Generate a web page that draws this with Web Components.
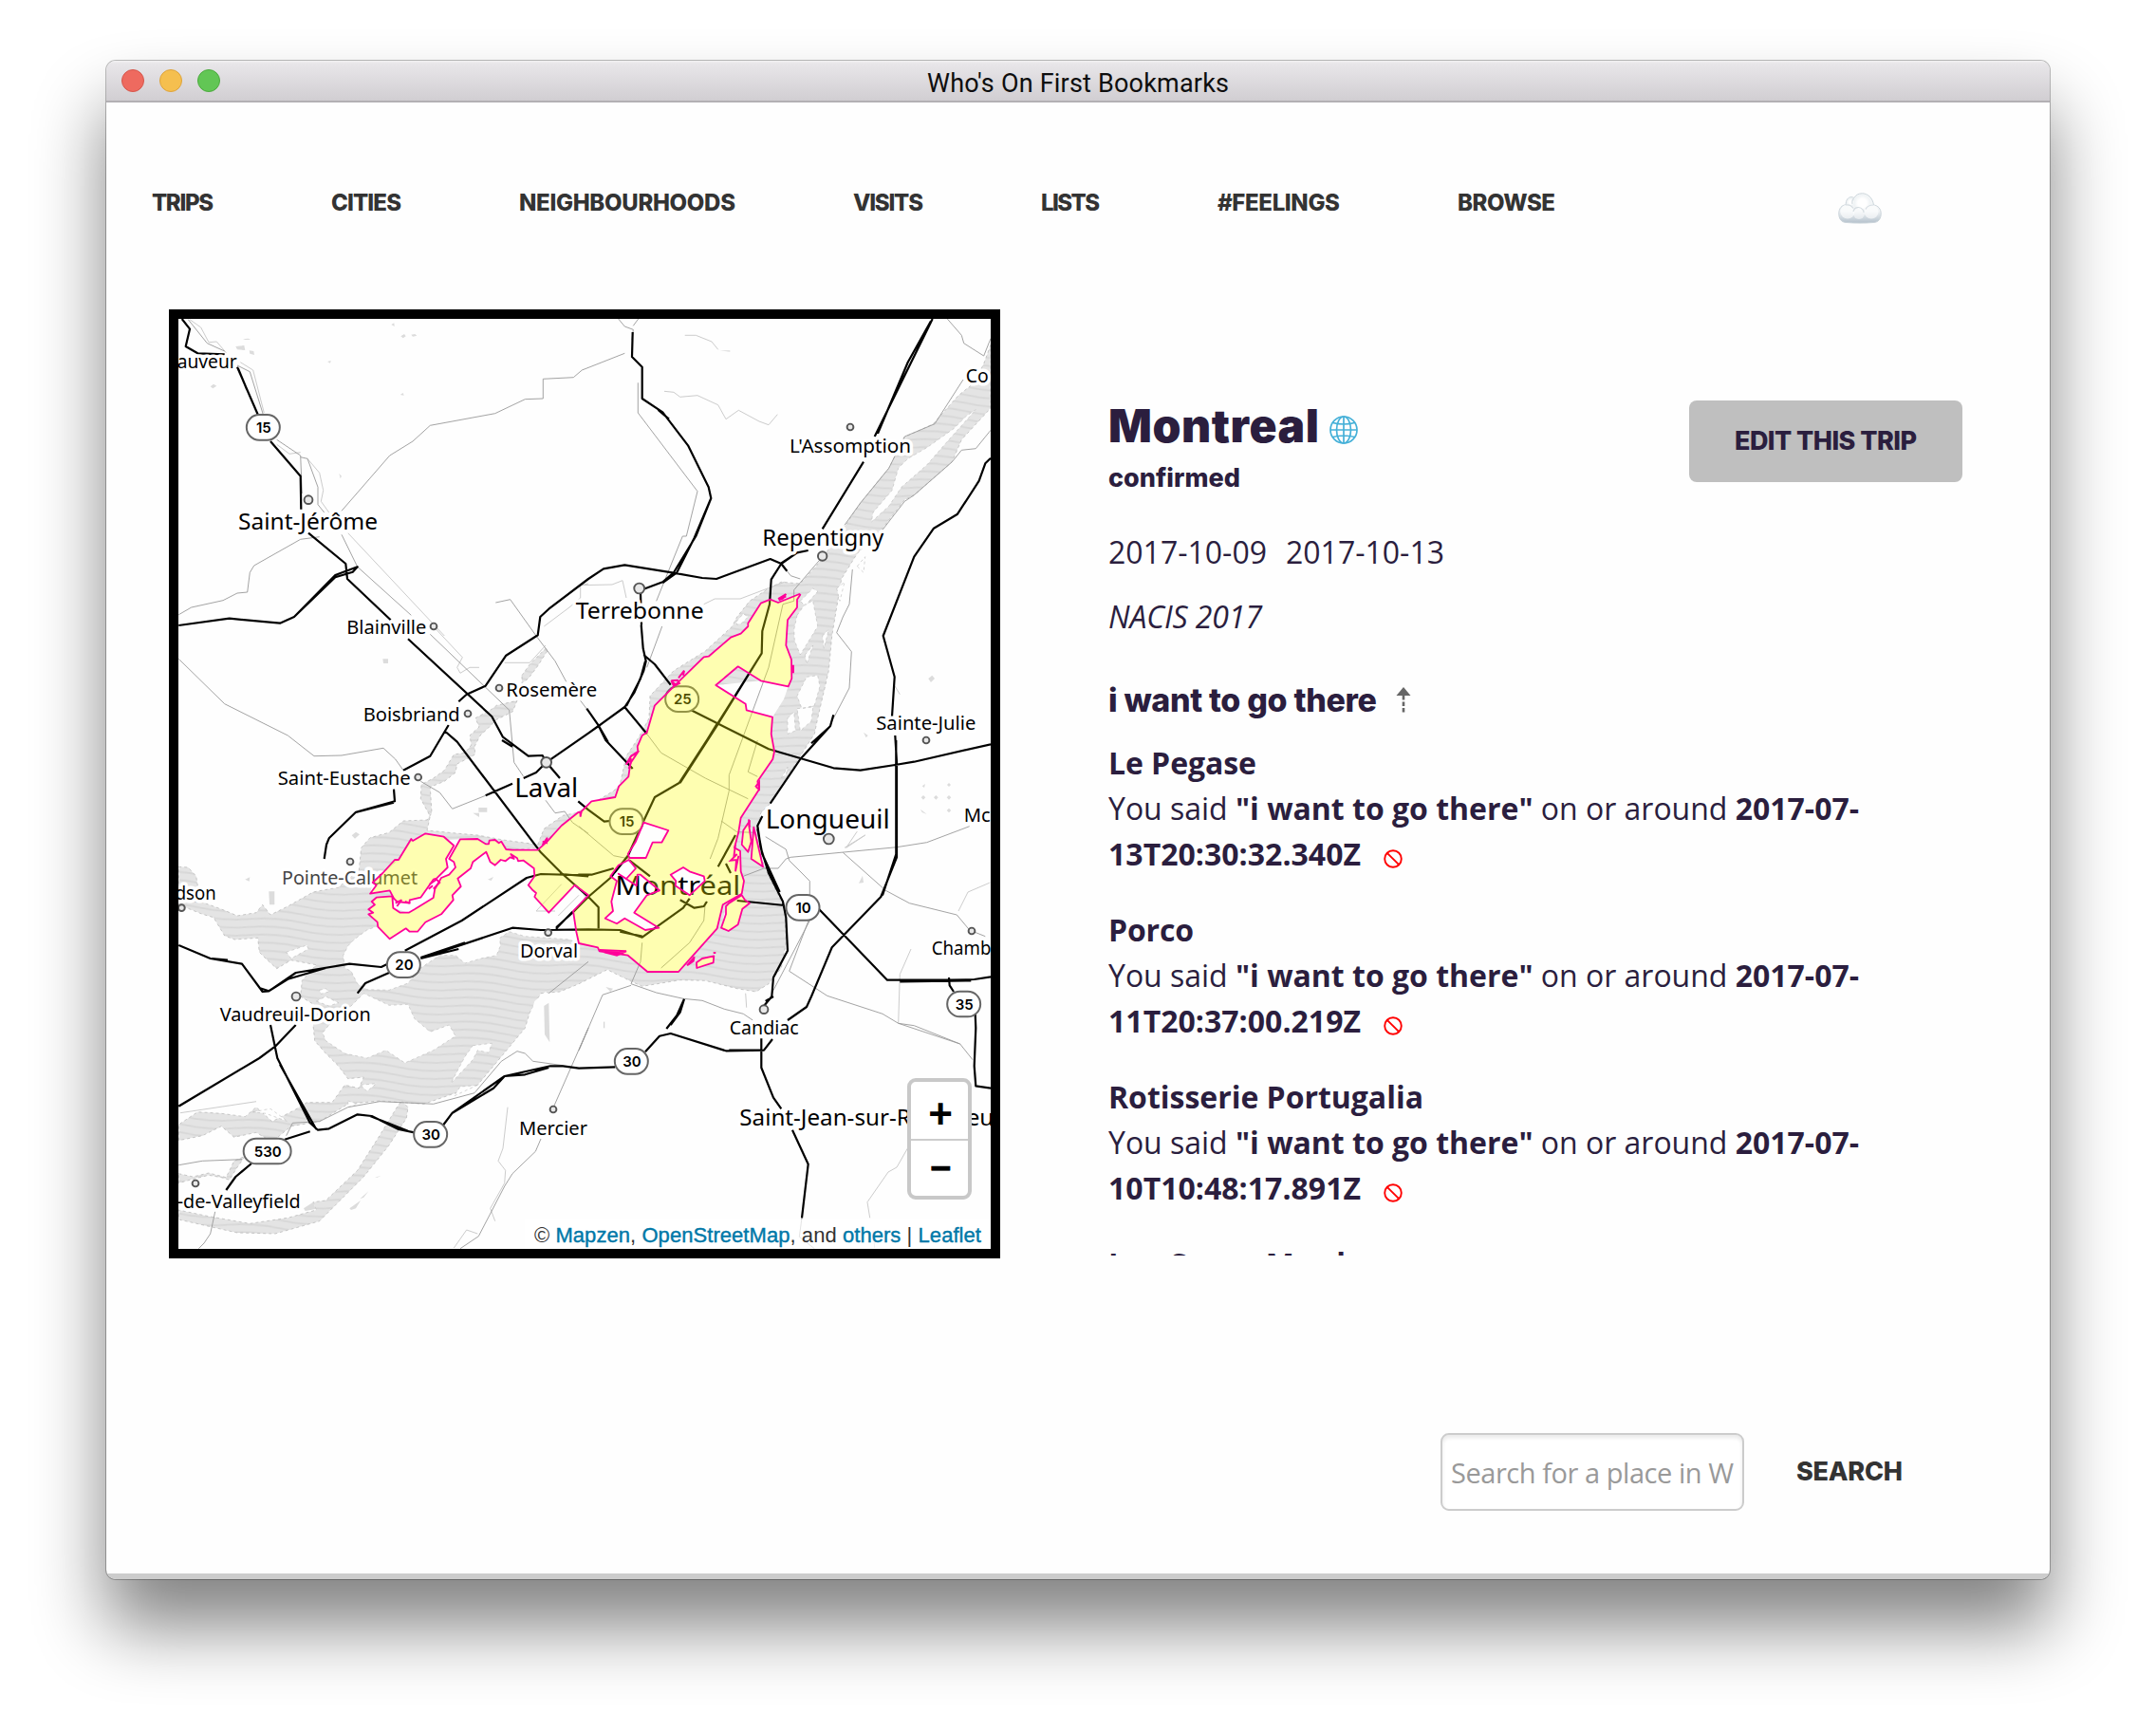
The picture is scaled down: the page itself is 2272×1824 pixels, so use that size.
<!DOCTYPE html>
<html lang="en">
<head>
<meta charset="utf-8">
<title>Who's On First Bookmarks</title>
<style>
  html, body { margin: 0; background: #fff; }
  body { width: 2272px; height: 1824px; overflow: hidden; font-family: "Open Sans", "Noto Sans", sans-serif; color: #2b1e3e; }
</style>
</head>
<body>
<app-window caption="Who's On First Bookmarks">
  <nav-bar></nav-bar>
  <main-row>
    <trip-map></trip-map>
    <trip-detail></trip-detail>
  </main-row>
  <search-bar></search-bar>
</app-window>

<script>
const define = (name, html, setup) => customElements.define(name, class extends HTMLElement {
  connectedCallback() {
    if (this.shadowRoot) return;
    this.attachShadow({ mode: 'open' }).innerHTML = html;
    if (setup) setup.call(this, this.shadowRoot);
  }
});

/* A run of text tracked to an exact measure. */
define('fit-text', `<style>:host{display:inline-block;white-space:nowrap}span{display:inline-block;white-space:pre}</style><span><slot></slot></span>`,
  function (root) {
    const s = root.querySelector('span'), want = +this.getAttribute('w'), n = this.textContent.length;
    const d = (want - s.getBoundingClientRect().width) / (n - 1);
    s.style.letterSpacing = d.toFixed(3) + 'px';
    s.style.marginRight = (-d).toFixed(3) + 'px';
  });

define('app-window', `<style>
  :host{display:flex;flex-direction:column;margin:64px 112px;width:2048px;height:1600px;border-radius:10px;background:#fefefe;overflow:hidden;
    box-shadow:0 0 0 1px rgba(0,0,0,.26),0 50px 76px rgba(0,0,0,.49)}
  header{height:42px;flex:none;display:grid;grid-template-columns:1fr auto 1fr;align-items:center;
    background:linear-gradient(#f3f2f3 0,#e8e6e9 3px,#d1ced2 100%);border-bottom:2px solid #b3b0b4}
  .lights{display:flex;gap:16px;padding-left:16px}
  i{box-sizing:border-box;width:24px;height:24px;border-radius:50%;background:#ee6a5f;border:1px solid #d5564b}
  i+i{background:#f5bf4f;border-color:#dda33c} i+i+i{background:#62c655;border-color:#4caa3e}
  .cap{font:27px/42px Roboto,sans-serif;color:#0e0e0e;padding-top:3px;box-sizing:border-box;height:42px}
  .foot{height:6px;background:#ccc;margin-top:auto;flex:none}
  </style><header><div class="lights"><i></i><i></i><i></i></div><div class="cap"></div><div></div></header>
  <slot></slot><div class="foot"></div>`,
  function (root) { root.querySelector('.cap').innerHTML = `<fit-text w="318">${this.getAttribute('caption')}</fit-text>`; });

define('nav-bar', `<style>
  :host{display:flex;height:218px;flex:none;padding:91px 0 0 48px;box-sizing:border-box;gap:124px;font:800 24px/30px Inter,sans-serif;color:#333}
  svg{display:block;margin:4px 0 0 174px}
  </style>
  <fit-text w="65">TRIPS</fit-text><fit-text w="74">CITIES</fit-text><fit-text w="228">NEIGHBOURHOODS</fit-text>
  <fit-text w="74">VISITS</fit-text><fit-text w="62">LISTS</fit-text><fit-text w="129">#FEELINGS</fit-text><fit-text w="103">BROWSE</fit-text>
  <svg width="46" height="33" viewBox="0 0 46 33">
    <defs><linearGradient id="c" x2="0" y2="1"><stop offset="0" stop-color="#f6f8f9"/><stop offset=".6" stop-color="#f0f3f5"/><stop offset="1" stop-color="#b4c1cc"/></linearGradient>
    <radialGradient id="p"><stop offset=".5" stop-color="#fff"/><stop offset="1" stop-color="#eef2f4"/></radialGradient></defs>
    <path d="M9 31.500C3 31.500.7 27 .8 22 .8 16.500 4 13 8.200 12.800 8 8 10.500 4.600 14 4.700 15.500 4.700 16 5.200 17 5.500 18.500 2.500 21.500.8 25.500.8 31 .8 36.500 5.500 37.500 13 42 13.500 45.200 17 45.200 22 45.200 27.500 42.500 31.500 37 31.500 28 32.300 18 32.300 9 31.500Z" fill="url(#c)" stroke="#cbd4da" stroke-width="1"/>
    <circle cx="25.500" cy="11" r="9" fill="url(#p)"/><circle cx="13.500" cy="10" r="4" fill="url(#p)"/>
    <circle cx="10" cy="20" r="7.500" fill="#fff" opacity=".6"/><circle cx="35" cy="20" r="7.500" fill="#fff" opacity=".6"/><circle cx="22" cy="22" r="6" fill="#fff" opacity=".5"/>
    <path d="M8 13c3-.6 6 .5 8 3.500M16.500 6c-2 2-2 4-1.500 6M37.500 13c-5 0-7 1-8.500 4.500M16 20c1-5 7-6 10-2 1 1 1 2 1 3" fill="none" stroke="#d6dde2" stroke-width="1.200"/>
  </svg>`);

define('main-row', `<style>:host{display:flex;gap:114px;padding-left:66px;height:1000px;flex:none}</style><slot></slot>`);

/* Survey sheets: each letter is a sheet origin; points are given in thirds of a pixel. */
const SHEET = { A: [170, 320], B: [610, 320], C: [170, 660], D: [610, 600], E: [170, 1000], F: [610, 1000] };
const at = (k, x, y) => [SHEET[k][0] + x / 3, SHEET[k][1] + y / 3];
const line = (str, close) => {
  let k = 'A', out = '', cmd = 'M';
  for (const t of str.trim().split(/\s+/)) {
    if (SHEET[t]) { k = t; continue; }
    if (t === '/') { if (close) out += 'Z'; cmd = 'M'; continue; }
    const [x, y] = t.split(',').map(Number), p = at(k, x, y);
    out += cmd + p[0].toFixed(1) + ' ' + p[1].toFixed(1); cmd = 'L';
  }
  return out + (close ? 'Z' : '');
};

const water = `
 B 1302,130 1280,190 1250,250 1200,290 1120,380 1030,422 1000,480 980,520 890,630 850,690 780,790 750,830 700,885 640,880 600,900 540,940 500,990
 D 485,180 400,258 300,320 225,400 222,470 190,530 150,590 130,680 110,700 10,760 C 1310,590 1270,598 1210,640 1190,690 1080,675 1000,660 940,655 840,645
 850,600 820,545 822,500 860,480 895,455 925,405 960,400 980,375 975,345 1005,318 993,290 1045,262 1060,250 1125,235 1110,270 1060,295 1030,325 1008,345 990,380 992,405 935,435 930,462 895,490 850,508 855,590
 840,612 765,615 720,652 660,668 632,700 625,770 560,825 480,840 400,885 345,912 320,880 300,905 240,915 200,898 130,872 60,868 115,820 110,790 85,762 55,760 55,880 130,910 165,920 200,978 232,990 305,985 310,1030
 E 330,30 365,62 410,35 490,50 445,100 440,150 490,180 480,240 485,290 520,330 560,370 590,410 640,405 625,440 580,430 540,485 460,485 420,510 350,545 300,500 265,530 190,520 115,515 55,555 55,605 130,590 190,560 230,595 300,580 350,610 410,560 500,545 590,490 690,480 830,490 930,455 1000,430 1100,310 1150,250 1165,200 1200,140 1260,135 1320,110
 F 40,90 90,65 150,95 200,118 320,98 400,100 500,125 560,135 600,110 640,60 D 655,1180 650,1070 630,1030 600,970 580,920 562,830 575,770 605,740 700,590 745,520 755,470 790,320 800,210
 B 800,1050 830,870 880,790 960,710 1030,620 1060,605 1180,500 1210,430 1302,330 /
 C 1140,155 1165,120 1215,70 1222,75 1190,125 1160,165 1140,180 /
 E 760,480 780,500 775,535 720,620 640,720 500,860 360,900 240,897 130,872 55,855 55,825 150,845 280,868 400,850 490,825 480,800 520,795 620,700 690,590 745,500 /
 E 55,710 100,720 150,708 205,722 230,670 265,655 240,690 215,730 190,722 150,715 90,730 55,740`;
const land = `
 B 1225,355 1185,395 1100,455 1040,490 1010,520 990,590 930,660 925,690 980,640 1020,580 1100,510 1170,430 1255,335 /
 D 690,145 715,110 740,100 755,180 700,270 682,225 680,190 /
 D 720,340 755,335 762,370 745,430 705,440 690,400 / D 660,470 680,450 685,510 660,520 / D 690,440 740,435 735,480 700,510 / D 498,165 520,140 535,150 515,170 500,175 /
 D 715,270 740,240 720,300 / D 770,210 790,190 775,250 / D 640,660 660,625 655,650 / B 880,830 905,800 900,850 / B 700,940 740,900 755,910 715,955 / B 815,900 840,880 825,940 /
 E 530,240 600,180 640,140 720,178 780,175 800,220 850,262 910,240 930,275 860,320 770,360 710,320 650,345 580,330 520,290 510,265 /
 C 722,985 860,855 1027,710 1200,700 1320,700 1350,985 1320,1003 1290,990 1220,985 1150,980 1100,965 1070,985 1072,1010 1060,1040 E 1010,30 960,45 930,20 880,20 820,60 780,108 720,130 650,128 620,110 600,70 580,60 575,20 C 590,1010 610,990 650,960 690,945 /
 E 985,305 1045,298 1035,328 1000,320 985,350 915,425 960,340 / E 1000,430 925,465 945,435 985,432 / E 630,430 680,425 650,450 / E 590,480 620,490 590,500 /
 E 500,130 520,125 530,135 505,142 / E 490,165 520,150 560,170 530,180 /
 E 395,10 460,-12 465,0 410,30 / E 290,515 345,505 400,545 330,520`;
/* Ground below the city shape, where the shore has no outline of its own. */
const ground = `
 D 437,366 575,352 662,370 648,410 612,467 530,445 /
 C 735,860 860,800 905,720 905,675 945,673 1000,700 930,800 860,870 780,905 735,890`;
const specks = `
 A 235,135 262,132 265,147 240,145 / A 278,148 292,150 294,162 280,158 / A 258,112 275,110 282,114 265,114 / A 155,262 165,254 175,260 163,268 / A 757,103 768,96 773,103 764,109 / A 790,98 802,96 808,101 795,104 / A 727,66 736,61 737,72 / A 525,183 536,180 534,188 / A 755,288 764,282 767,290 / A 562,537 570,545 566,553 /
 C 700,103 717,103 717,117 702,117 / C 602,661 615,650 627,658 612,671 / C 340,838 358,838 358,880 342,880 / C 1003,573 1030,573 1030,587 1003,587 / C 985,590 1005,590 1005,603 / C 265,800 280,793 278,806 / C 1032,800 1050,792 1043,804 /
 D 1085,685 1095,678 1092,690 / D 1164,681 1170,675 1176,681 1170,687 / D 1082,721 1089,714 1096,721 1089,728 / D 1122,721 1129,714 1136,721 1129,728 / D 1163,721 1170,714 1177,721 1170,728 / D 1163,762 1170,755 1177,762 1170,769 / D 1080,758 1100,774 1085,768 / D 1105,345 1117,335 1125,345 1113,357 / D 885,992 897,968 900,990 / D 900,515 914,525 908,532 /
 E 450,820 480,800 488,822 455,828 / E 595,820 630,795 615,820 600,825 / E 628,790 655,766 640,785 / E 675,722 695,716 683,722 / E 1210,180 1225,170 1228,295 1212,270 /
 F 85,120 108,125 100,135 / B 445,148 478,148 478,152 /`;
const islets = `E 1170,200 1180,165 1215,135 1235,150 1232,190 1220,235 1195,195 / F 60,110 150,95 100,75 60,90`;
const trunk = `
 A 65,48 90,80 77,135 115,157 200,160 / A 240,200 305,350 / A 243,205 270,270 / A 345,435 440,545 442,650 / A 465,725 583,822 588,870 725,1000 / C 780,40 1045,285 1080,350 1160,410 1205,408 1217,430 1260,480 / C 1077,360 1110,380 / C 1318,553 1350,580 D 80,797 100,795 /
 A 55,1017 215,995 375,1010 420,990 550,865 605,848 620,832 550,858 420,990 /
 C 765,455 850,410 908,312 / C 895,330 935,365 1200,715 1265,780 1350,855 D 62,1068 62,1135 /
 C 940,238 965,215 1025,188 1090,92 1190,28 A 1198,990 1225,965 1350,870 B 78,838 145,826 295,850 390,867 435,870 605,807 640,822 658,845 / C 965,215 1025,188 /
 C 735,515 738,553 615,587 530,670 522,690 515,735 / C 735,557 615,588 /
 B 170,90 168,168 200,200 200,300 265,343 345,448 410,580 418,615 370,735 300,850 265,880 205,902 / B 418,615 365,740 310,850 265,882 / B 250,335 285,365 / B 195,915 198,1015 / D 197,175 203,250 212,290 205,320 175,390 145,435 62,495 C 1350,338 1217,430 1185,462 1145,480 / C 1110,497 1025,535 / D 210,290 195,345 150,432 /
 D 205,270 240,300 290,365 / D 355,445 600,568 700,597 805,628 890,635 1000,618 1060,608 1302,553 /
 B 1118,48 935,420 / B 1113,55 1040,185 945,410 / B 900,500 770,712 / B 725,780 690,787 640,822 608,872 603,950 D 580,195 578,265 437,490 317,675 240,720 205,795 155,905 100,975 30,1035 C 1300,905 1250,950 1250,960 / B 690,787 640,820 /
 D 437,488 380,580 / D 575,270 437,493 320,675 / D 145,435 215,520 / D 25,440 60,490 85,540 170,630 / D 60,490 92,545 / D 160,920 225,970 / D 495,840 440,940 / D 465,930 480,960 / D 320,1045 365,1070 395,1065 405,1050 /
 D 110,945 40,965 0,965 C 1350,787 1200,783 1155,795 950,930 770,1025 / C 1350,790 1260,783 / C 820,1050 1110,953 1200,960 1350,958 D 130,1140 200,1163 330,1070 350,1040 / C 820,1047 960,1000 / D 130,1145 200,1160 / C 1300,902 1252,952 /
 D 500,1047 650,1062 / D 760,1075 975,1298 1170,1298 1250,1296 1302,1288 / D 1015,1303 1240,1300 /
 D 805,460 795,495 700,600 605,740 / D 790,500 735,550 / D 580,780 565,810 575,880 600,960 645,1050 655,1100 660,1205 615,1290 610,1350 F 585,180 / D 565,820 580,900 635,1020 / F 615,150 590,165 /
 B 1302,488 1285,505 1265,560 1197,665 1122,710 1060,800 962,1050 D 998,340 990,465 / D 1000,525 1005,610 1005,910 955,1035 800,1195 735,1350 F 720,183 660,225 / D 1003,540 1003,900 960,1030 / F 612,285 585,320 465,322 290,267 255,275 210,325 / F 475,320 580,320 /
 F 115,373 0,377 E 1270,370 1230,370 1085,402 920,518 890,558 / E 1225,375 1150,397 1085,402 1050,440 920,518 / F 577,283 577,375 615,470 640,505 / F 675,572 725,680 705,850 / F 333,158 310,210 277,252 / F 333,158 320,200 290,240 /
 F 1170,90 1172,115 1185,135 / F 1253,205 1255,250 1250,370 1255,433 1302,440 /
 E 55,497 310,345 360,308 425,240 / E 345,240 367,345 470,550 495,572 530,568 620,523 665,528 750,570 800,580 / E 375,365 490,570 / E 660,528 780,575 / E 55,-12 155,30 255,47 320,135 340,133 425,75 595,47 695,57 720,45 / E 160,30 210,35 / E 310,123 340,133 400,95 520,60 / E 820,30 940,0 / E 720,75 645,108 620,140 / E 390,602 470,577 / E 285,678 235,720 205,762`;
const minor = `
 A 55,983 95,960 195,938 240,915 272,912 280,850 293,828 440,745 500,737 / A 570,655 722,480 795,435 850,385 1055,347 1150,302 1207,300 1207,238 1303,233 1330,210 B 10,210 145,157 /
 A 570,730 620,832 790,985 / C 850,25 1100,265 1115,430 1145,475 / C 55,103 200,245 400,345 483,410 570,408 702,385 740,420 765,455 / C 820,490 880,525 920,577 1025,535 /
 B 187,250 187,345 375,593 340,735 328,735 245,940 / B 125,48 145,72 172,82 168,115 / B 188,48 172,70 / D 263,180 215,310 / B 1165,48 1210,100 1217,125 1280,165 1302,110 / B 1215,240 1125,380 1030,420 980,520 890,630 840,700 / B 1302,400 1255,458 1210,463 1180,500 1060,605 1030,625 960,715 / B 770,800 680,905 680,940 D 645,110 600,310 475,650 475,700 440,850 415,915 / B 865,840 855,950 D 835,150 815,200 862,260 855,375 800,480 /
 B 640,822 670,860 700,870 / D 215,520 260,580 400,660 535,725 / D 0,812 110,905 160,915 / C 1215,550 1245,590 1275,585 1300,620 1350,655 / D 565,540 535,640 565,655 / D 450,795 500,830 560,832 / D 400,1050 395,1110 350,1180 260,1260 /
 D 520,970 585,945 630,945 655,915 670,910 1005,878 1100,863 1235,812 / D 590,845 655,885 665,920 730,985 730,1100 665,1270 785,1348 F 960,205 1010,235 1205,300 1245,350 / F 1010,235 1060,242 1205,300 / D 835,895 970,1015 1045,1055 1195,1092 1235,1140 1285,1160 / D 730,1110 610,1340 /
 D 200,1180 195,1240 165,1310 F 245,138 330,157 390,163 460,190 520,205 550,225 / F 165,115 75,145 0,320 E 1350,250 1240,500 / E 1200,600 1183,640 1110,710 1085,750 1003,908 945,947 / F 705,850 697,910 745,947 / E 55,683 130,670 255,665 / E 170,830 155,900 135,930 118,947 / E 395,590 415,550 500,545 590,500 690,482 860,490 990,455 1075,355 1125,323 1150,330 1175,355 1270,368 /
 E 1350,40 1225,140 / A 1057,945 1103,935 1185,1050 C 1245,110 1280,175 / C 1325,235 1350,268 / A 85,50 145,125 200,150 / A 240,195 280,215 322,350 / A 365,430 440,480 445,600 / A 440,485 462,490 495,580 495,635 515,660`;
const faint = `
 A 90,50 125,75 150,122 175,120 205,155 / A 250,185 290,210 325,345 / A 365,445 405,475 440,470 / A 462,490 500,535 512,590 505,625 530,660 / A 590,725 895,1050 / C 860,0 952,98 935,130 945,148 975,130 1005,130 / C 1085,115 1165,115 1215,60 / B 0,890 105,888 138,875 150,930 / B 395,950 430,933 510,933 650,880 / A 1210,1020 1290,960 1325,930 1325,890 1350,885 /
 B 335,100 370,100 420,120 440,145 / B 270,277 300,280 320,295 375,290 440,320 465,365 505,337 570,372 600,383 628,350 / F 1050,0 1015,80 1010,235 / F 1045,570 1045,620 1005,690 978,705 912,800 920,850 / F 930,890 935,945 / D 1300,990 1230,1020 1200,1080 / E 60,518 300,482 / E 1095,500 1080,630 1065,670 1088,700 1085,740 1040,820 1055,860 / E 1000,900 965,888 925,945 / D 840,880 905,840 845,880 880,828 / D 1000,370 1015,395 / F 80,230 80,250 / F 527,140 530,185 /
 C 1185,900 1265,815 / C 1255,915 1320,850 / C 1185,900 1245,900`;
const island = `
 D 700,80 690,95 690,120 660,160 655,240 672,285 673,345 662,370 575,352 503,307 433,366 527,425 530,445 612,467 608,520 618,575 613,600 565,670 570,695 512,785 505,830 492,880 510,890 512,955 522,985 515,1025 455,1060 437,1135 315,1272 217,1272 155,1220 65,1207 60,1195 0,1182
 C 1312,965 1302,900 1350,850 1307,818 1225,905 1180,855 1185,843 1175,835 1160,818 1180,790 1178,765 1145,740 1128,742 1125,733 1105,720 1115,735 1103,730 1088,742 1073,738 1055,755 1040,745 1027,713 985,745 978,765 937,797 947,822 920,850 923,865 885,910 835,935 810,965 785,965 773,955 722,988 685,950 683,935 655,910 670,905 655,895 675,880 665,870 680,857 730,853 733,890 755,905 782,905 800,895 860,858 865,830 885,795 910,785 930,762 925,745 910,735 945,673 1000,672 1025,688 1035,688 1037,677 1055,675 1067,685 1075,680 1090,705 1110,707 1190,707 1220,680 1265,630 1318,588 1328,588
 D 5,778 5,768 40,733 115,720 127,685 157,655 165,600 150,615 165,590 187,575 185,560 200,525 215,515 240,430 300,370 395,277 410,275 480,215 512,203 535,180 535,170 575,107 605,95 630,105 697,78`;
const city = island + ` /
 D 205,800 283,825 262,863 233,863 212,912 160,912 155,900 180,860 / D 158,918 180,945 150,978 125,962 182,1000 185,965 195,965 255,1015 215,1030 175,1085 253,1133 210,1140 145,1103 120,1120 83,1103 108,1080 103,1050 120,985 100,970 125,935 /
 D 290,965 330,942 350,955 395,970 398,985 350,1030 305,1000 307,985 /
 C 835,655 893,665 925,693 900,735 905,762 870,797 860,800 820,857 785,865 785,875 745,870 735,860 722,835 660,845 680,818 668,810 700,780 738,738 750,738 790,672 795,678 /
 D 540,795 520,825 515,870 535,893 545,860 538,810 / D 553,815 582,940 545,915 / D 515,1030 475,1055 465,1065 465,1090 450,1133 473,1143 503,1123 517,1073 540,1055 525,1045 / D 372,1243 390,1230 427,1222 425,1243 373,1260`;
const isles = `
 C 835,655 893,665 925,693 900,735 905,762 860,800 820,857 745,870 722,835 660,845 668,810 750,738 795,675 /
 D 540,795 520,825 515,870 535,893 545,860 / D 553,815 582,940 545,915 / D 515,1030 465,1065 450,1133 473,1143 503,1123 517,1073 540,1055 / D 372,1243 390,1230 427,1222 425,1243 373,1260`;
const scribble = `
 D 630,93 655,78 645,92 632,97 655,85 / D 292,352 312,350 318,360 300,368 292,352 310,368 / D 315,343 333,320 330,335 / D 672,305 678,305 678,325 672,325 / D 155,610 165,590 185,580 165,610 158,630 / D 558,688 570,672 570,695 560,688 / D 495,868 490,910 500,900 480,920 498,918 495,955 505,905 / D 65,1203 150,1207 120,1220 80,1210 140,1213 100,1215 / D 342,1252 365,1225 362,1238 345,1250 / D 425,1212 433,1212 / C 1205,690 1220,668 1218,685 1205,680 / C 1325,600 1325,585 / C 845,830 858,820 / C 848,815 870,800 880,810 860,830 / C 740,875 760,865 745,885 / C 770,870 785,875 / D 5,782 5,765 / D 537,790 540,815`;

const towns = [
 ['auveur','A',50,205,20,63],['Saint-Jérôme','A',243,713,24,147],['Blainville','A',586,1043,20,84],["L'Assomption",'B',666,470,20,128],['Repentigny','B',580,765,24,128],
 ['Terrebonne','B',-10,997,24,135],['Rosemère','C',1090,221,20,96],['Boisbriand','C',638,299,20,102],['Saint-Eustache','C',368,500,20,140],['Laval','C',1117,540,28,67],
 ['Pointe-Calumet','C',381,816,20,143,'#444'],['dson','C',44,863,20,43],['Dorval','C',1134,1048,20,61],['Vaudreuil-Dorion','E',185,228,20,159],['Mercier','E',1131,588,20,72],
 ['-de-Valleyfield','E',50,818,20,130],['Candiac','F',476,270,20,73],['Saint-Jean-sur-Richelieu','F',508,557,24,268],['Chambly','D',1115,1218,20,77],['Sainte-Julie','D',940,508,20,105],
 ['Mc','D',1217,797,20,28],['Longueuil','D',590,818,28,131],['Montréal','D',115,1030,28,132],['Co','B',1223,250,20,24]];
const dots = [['A',465,620,12],['B',858,390,9],['B',770,798,13],['B',191,900,15],['A',861,1020,9],['C',1068,195,9],['C',969,276,9],['C',812,477,9],['C',1217,430,15],['C',597,744,9],['C',64,890,9],['C',1223,968,9],['D',1098,540,9],['D',790,852,15],['D',1242,1143,9],['E',426,150,12],['E',108,741,9],['E',1239,507,9],['F',585,191,12]];
const shields = [['15','A',322,391],['25','D',326,410],['15','D',150,797],['10','D',708,1069],['20','E',766,50],['530','E',335,639],['30','E',851,586],['30','F',166,355],['35','F',1217,174]];

define('map-zoom', `<style>
  :host{position:absolute;right:20px;bottom:52px;box-sizing:border-box;width:68px;height:128px;border:4px solid #c8c8c8;border-radius:9px;display:flex;flex-direction:column;background:#fff;overflow:hidden}
  span{flex:1;display:flex;align-items:center;justify-content:center;color:#000;font:bold 44px/60px "Liberation Sans",sans-serif;padding:8px 0 0 2px;box-sizing:border-box;height:60px}
  span+span{border-top:2px solid #ccc;font-size:38px;padding-top:0;-webkit-text-stroke:.8px #000}
  </style><span>+</span><span>−</span>`);
define('map-credit', `<style>
  :host{position:absolute;right:0;bottom:0;height:31px;padding:0 10px;background:rgba(255,255,255,.7);font:22px/33px "Liberation Sans",sans-serif;color:#333}
  a{color:#0078a8;-webkit-text-stroke:.4px #0078a8}
  </style><fit-text w="471">© <a>Mapzen</a>, <a>OpenStreetMap</a>, and <a>others</a> | <a>Leaflet</a></fit-text>`);

define('trip-map', `<style>
  :host{display:block;box-sizing:border-box;width:876px;height:1000px;border:10px solid #000;position:relative;overflow:hidden;background:#fefefe;flex:none}
  svg{display:block}
  text{font-family:"Noto Sans","Open Sans",sans-serif}
  .t{stroke:#fff;stroke-width:7;stroke-linejoin:round;paint-order:stroke}
  .s{font:600 15px Inter,sans-serif;text-anchor:middle}
  </style><svg width="856" height="980" viewBox="188 336 856 980"></svg><map-zoom></map-zoom><map-credit></map-credit>`,
  function (root) {
    const town = towns.map(([n, k, x, y, s, w, c]) => { const p = at(k, x, y);
      return `<text class="t" x="${p[0].toFixed(1)}" y="${p[1].toFixed(1)}" font-size="${s}" textLength="${w}" lengthAdjust="spacingAndGlyphs" fill="${c || '#000'}">${n}</text>`; }).join('');
    const dot = dots.map(([k, x, y, r]) => { const p = at(k, x, y); return `<circle cx="${p[0]}" cy="${p[1]}" r="${r / 3 + .4}" fill="#e8e8e8" stroke="#555" stroke-width="1.900"/>`; }).join('');
    const shield = shields.map(([n, k, x, y]) => { const p = at(k, x, y), w = n.length > 2 ? 50 : 35;
      return `<rect x="${p[0] - w / 2}" y="${p[1] - 13.3}" width="${w}" height="26.600" rx="13.300" fill="#fff" stroke="#666" stroke-width="2"/><text class="s" x="${p[0] + .6}" y="${p[1] + 5.500}">${n}</text>`; }).join('');
    root.querySelector('svg').innerHTML = `
      <defs><pattern id="w" width="110" height="8.500" patternUnits="userSpaceOnUse" patternTransform="rotate(4)">
        <rect width="110" height="8.500" fill="#e4e4e4"/><path d="M0 4.200C18 1.500 37 1.500 55 4.200S92 7 110 4.200" fill="none" stroke="#d7d7d7" stroke-width="1.700"/></pattern></defs>
      <path d="${line(water, 1)}" fill="url(#w)" stroke="#b5b5b5" stroke-width=".7" stroke-dasharray="3 3"/>
      <path d="${line(land, 1)}" fill="#fefefe" stroke="#bbb" stroke-width=".6" stroke-dasharray="3 3"/>
      <path d="${line(island, 1)}${line(isles, 1)}${line(ground, 1)}" fill="#fefefe"/>
      <path d="${line(islets, 1)}" fill="#fefefe"/>
      <path d="${line(specks, 1)}" fill="#dcdcdc"/>
      <g fill="none" stroke-linejoin="round">
        <path d="${line(faint)}" stroke="#ccc" stroke-width="1"/>
        <path d="${line(minor)}" stroke="#999" stroke-width=".9"/>
        <path d="${line(trunk)}" stroke="#000" stroke-width="2.200"/>
      </g>${shield}${town}${dot}
      <path d="${line(city, 1)}" fill="#ff0" fill-opacity=".3" fill-rule="evenodd" stroke="#ff0099" stroke-width="1.800" stroke-linejoin="round"/>
      <path d="${line(scribble)}" fill="none" stroke="#ff0099" stroke-width="1.900"/>`;
  });

define('place-note', `<style>
  :host{display:block;height:144px;margin-bottom:32px;font-size:32px;line-height:48px;flex:none;white-space:nowrap}
  b{font-weight:700} div{display:flex;align-items:center;height:48px}
  svg{margin:10px 0 0 23px}
  </style><div><b><slot name="place"></slot></b></div><div><fit-text w="791">You said <b>"i want to go there"</b> on or around <b>2017-07-</b></fit-text></div>
  <div><b><slot name="time"></slot></b><svg width="22" height="22" viewBox="0 0 22 22" fill="none" stroke="#f00" stroke-width="1.900"><circle cx="11" cy="11" r="8.800"/><path d="M4.800 4.800 17.200 17.200"/></svg></div>`);

define('trip-detail', `<style>
  :host{display:flex;flex-direction:column;width:900px;height:997px;padding-top:96px;box-sizing:border-box;overflow:hidden;font-size:32px;line-height:48px;color:#2b1e3e}
  .head{display:flex;justify-content:space-between;height:100px;flex:none}
  .p{font-family:Inter,sans-serif;font-weight:800}
  .title{display:flex;font-size:48px;line-height:54px;font-weight:900}
  .title svg{margin:15px 0 0 10px}
  .st{font-size:27px;line-height:36px;margin-top:10px}
  .btn{box-sizing:border-box;width:288px;height:86px;border-radius:8px;background:#bfbfbf;text-align:center;font-size:27px;line-height:86px}
  .dates{display:flex;gap:20px;margin-top:36px;height:48px;flex:none}
  .name{font-style:italic;margin-top:20px;height:48px;flex:none}
  .want{display:flex;font-size:34px;line-height:46px;height:44px;margin:41px 0 21px;flex:none}
  .want svg{margin:9px 0 0 20px}
  </style>
  <div class="head"><div>
    <div class="title p"><fit-text w="222">Montreal</fit-text>
      <svg width="32" height="32" viewBox="0 0 32 32" fill="none" stroke="#45b0d8" stroke-width="1.700"><circle cx="16" cy="16" r="14"/><ellipse cx="16" cy="16" rx="7.500" ry="14"/><path d="M16 2v28M2 16h28M4.500 8.500Q16 11.500 27.500 8.500M4.500 23.500Q16 20.500 27.500 23.500"/></svg></div>
    <div class="st p"><fit-text w="139">confirmed</fit-text></div>
  </div><div class="btn p"><fit-text w="192">EDIT THIS TRIP</fit-text></div></div>
  <div class="dates"><fit-text w="167">2017-10-09</fit-text><fit-text w="167">2017-10-13</fit-text></div>
  <div class="name"><fit-text w="162">NACIS 2017</fit-text></div>
  <div class="want p"><fit-text w="283">i want to go there</fit-text>
    <svg width="16" height="28" viewBox="0 0 16 28"><path d="M8 0 15.500 9H.5Z" fill="#666"/><path d="M8 9v18" stroke="#666" stroke-width="2.600" stroke-dasharray="4.500 2"/></svg></div>
  <place-note><fit-text slot="place" w="156">Le Pegase</fit-text><fit-text slot="time" w="266">13T20:30:32.340Z</fit-text></place-note>
  <place-note><fit-text slot="place" w="90">Porco</fit-text><fit-text slot="time" w="266">11T20:37:00.219Z</fit-text></place-note>
  <place-note><fit-text slot="place" w="332">Rotisserie Portugalia</fit-text><fit-text slot="time" w="266">10T10:48:17.891Z</fit-text></place-note>
  <place-note><span slot="place">Leo Super Mard</span><span slot="time"></span></place-note>`);

define('search-bar', `<style>
  :host{display:flex;align-items:center;justify-content:flex-end;gap:55px;height:82px;margin:184px 155px 0 0;flex:none}
  .box{box-sizing:border-box;width:320px;height:82px;border:2px solid #ccc;border-radius:9px;background:#fff;box-shadow:inset 0 3px 4px rgba(0,0,0,.09);padding:0 9px;overflow:hidden;font-size:29px;line-height:79px;color:#999;white-space:nowrap}
  .go{font:800 27px/81px Inter,sans-serif;color:#333;height:82px}
  </style><div class="box"><fit-text w="298">Search for a place in W</fit-text></div><div class="go"><fit-text w="112">SEARCH</fit-text></div>`);
</script>
</body>
</html>
